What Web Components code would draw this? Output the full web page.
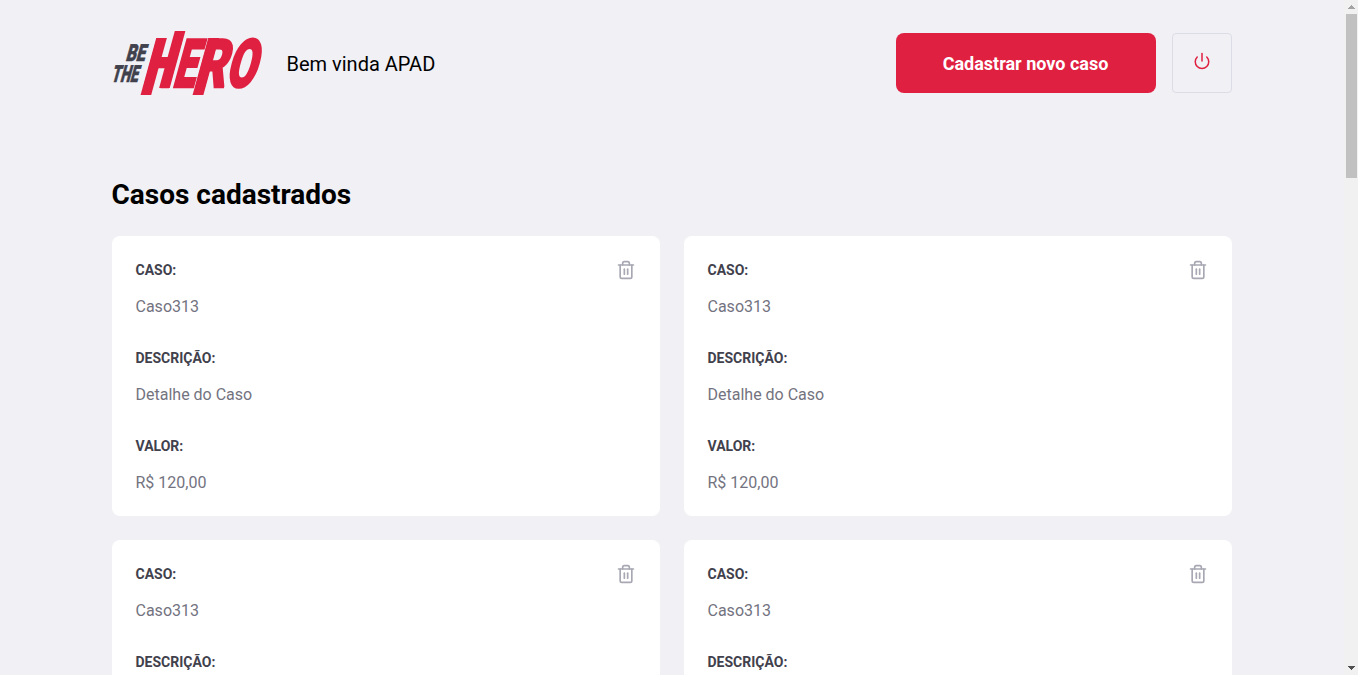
<!DOCTYPE html>
<html lang="pt-BR">
<head>
<meta charset="utf-8">
<title>Be The Hero</title>
<style>
html, body { margin: 0; height: 100%; overflow: hidden; background: #f0f0f5; }
body { font: 400 14px Roboto, sans-serif; color: #000; }
</style>
</head>
<body>
<hero-app></hero-app>
<script>
const define = (name, html, setup) => customElements.define(name, class extends HTMLElement {
  constructor() {
    super();
    this.attachShadow({ mode: 'open' }).innerHTML = html;
  }
  connectedCallback() { if (setup) setup(this); }
});

define('hero-logo', `
<style>
:host { display: block; width: 151px; height: 64px; }
svg { display: block; overflow: visible; }
text { font-family: Roboto, sans-serif; font-weight: 900; }
</style>
<svg width="151" height="64" viewBox="0 0 151 64" role="img" aria-label="Be The Hero">
  <g fill="#41414d" stroke="#41414d" stroke-width=".7">
    <text transform="translate(13.2 30) skewX(-15.4)" font-size="23.5" textLength="19.2" lengthAdjust="spacingAndGlyphs">BE</text>
    <text transform="translate(-1.2 50.8) skewX(-15.4)" font-size="23.5" textLength="26.5" lengthAdjust="spacingAndGlyphs">THE</text>
  </g>
  <g transform="translate(.5 57) skewX(-15.4)" fill="#e02041" stroke="#e02041" stroke-width="2.4" font-size="67">
    <text x="29" y="-1.2" textLength="29.2" lengthAdjust="spacingAndGlyphs">H</text>
    <text x="59" y="-1.2" textLength="22.3" lengthAdjust="spacingAndGlyphs">E</text>
    <text x="80.6" y="-1.2" textLength="31" lengthAdjust="spacingAndGlyphs">R</text>
    <text x="111.6" y="-1.2" textLength="29.4" lengthAdjust="spacingAndGlyphs">O</text>
    <g stroke="none">
      <rect x="30" y="-50" width="10.6" height="57"/>
      <rect x="46.6" y="-57" width="10.6" height="57"/>
      <rect x="82" y="-50" width="10.8" height="57"/>
    </g>
  </g>
</svg>`);

define('hero-button', `
<style>
:host { display: block; width: 260px; }
button { display: block; width: 100%; height: 60px; border: 0; border-radius: 8px; padding: 1px 0 0; background: #e02041; color: #fff; font: 700 18px/60px Roboto, sans-serif; text-align: center; }
</style>
<button type="button"><slot></slot></button>`);

define('logout-button', `
<style>
:host { display: block; }
button { box-sizing: border-box; display: flex; align-items: center; justify-content: center; width: 60px; height: 60px; padding: 0 0 4px; border: 1px solid #dcdce6; border-radius: 4px; background: transparent; }
</style>
<button type="button" aria-label="Sair">
  <svg width="18" height="18" viewBox="0 0 24 24" fill="none" stroke="#e02041" stroke-width="2" stroke-linecap="round" stroke-linejoin="round"><path d="M18.36 6.64a9 9 0 1 1-12.73 0"/><line x1="12" y1="2" x2="12" y2="12"/></svg>
</button>`);

define('page-header', `
<style>
:host { display: flex; align-items: center; height: 64px; }
.greeting { margin-left: 24px; padding-top: 2px; font-size: 20px; line-height: 26px; }
hero-button { margin-left: auto; }
logout-button { margin-left: 16px; }
</style>
<hero-logo></hero-logo>
<span class="greeting"><slot></slot></span>
<hero-button>Cadastrar novo caso</hero-button>
<logout-button></logout-button>`);

define('case-field', `
<style>
:host { display: block; }
strong { display: block; color: #41414d; font-size: 14px; font-weight: 700; line-height: 20px; text-transform: uppercase; }
p { margin: 16px 0 -1px; color: #737380; font-size: 16px; line-height: 21px; }
</style>
<strong></strong><p><slot></slot></p>`, el => {
  el.shadowRoot.querySelector('strong').textContent = el.getAttribute('label');
});

define('case-card', `
<style>
:host { box-sizing: border-box; display: flex; justify-content: space-between; align-items: flex-start; height: 280px; padding: 24px; border-radius: 8px; background: #fff; }
.fields { display: grid; gap: 32px; }
button { display: block; padding: 0; border: 0; background: none; }
svg { display: block; }
</style>
<div class="fields">
  <case-field label="Caso:"><slot name="title"></slot></case-field>
  <case-field label="Descrição:"><slot name="description"></slot></case-field>
  <case-field label="Valor:"><slot name="value"></slot></case-field>
</div>
<button type="button" aria-label="Excluir caso">
  <svg width="20" height="20" viewBox="0 0 24 24" fill="none" stroke="#a8a8b3" stroke-width="2" stroke-linecap="round" stroke-linejoin="round"><polyline points="3 6 5 6 21 6"/><path d="M19 6v14a2 2 0 0 1-2 2H7a2 2 0 0 1-2-2V6m3 0V4a2 2 0 0 1 2-2h4a2 2 0 0 1 2 2v2"/><line x1="10" y1="11" x2="10" y2="17"/><line x1="14" y1="11" x2="14" y2="17"/></svg>
</button>`);

define('page-scrollbar', `
<style>
:host { box-sizing: border-box; display: flex; flex-direction: column; align-items: flex-end; width: 14px; height: 100%; margin-left: 1px; padding-right: 1px; background: #f1f1f1; }
svg { display: block; flex: none; }
.thumb { width: 11px; height: 164px; background: #c1c1c1; }
.down { margin-top: auto; }
</style>
<svg width="11" height="14" fill="#a3a3a3" shape-rendering="crispEdges"><path d="M5 5h1v1h1v1h1v1h1v1H2V8h1V7h1V6h1z"/></svg>
<div class="thumb"></div>
<svg class="down" width="11" height="14" fill="#505050" shape-rendering="crispEdges"><path d="M2 5h7v1H8v1H7v1H6v1H5V8H4V7H3V6H2z"/></svg>`);

define('hero-app', `
<style>
:host { display: flex; height: 100vh; overflow: hidden; }
main { flex: 1; height: 100%; overflow: hidden; }
.container { width: 1120px; margin: 0 auto; padding-top: 31px; }
h1 { margin: 81px 0 23px; font-size: 28px; font-weight: 700; line-height: 37px; }
.cases { display: grid; grid-template-columns: repeat(2, 1fr); gap: 24px; }
</style>
<main>
  <div class="container">
    <page-header>Bem vinda APAD</page-header>
    <h1>Casos cadastrados</h1>
    <div class="cases"></div>
  </div>
</main>
<page-scrollbar></page-scrollbar>`, el => {
  el.shadowRoot.querySelector('.cases').innerHTML = Array.from({ length: 4 }, () => `
    <case-card>
      <span slot="title">Caso313</span>
      <span slot="description">Detalhe do Caso</span>
      <span slot="value">R$ 120,00</span>
    </case-card>`).join('');
});
</script>
</body>
</html>
